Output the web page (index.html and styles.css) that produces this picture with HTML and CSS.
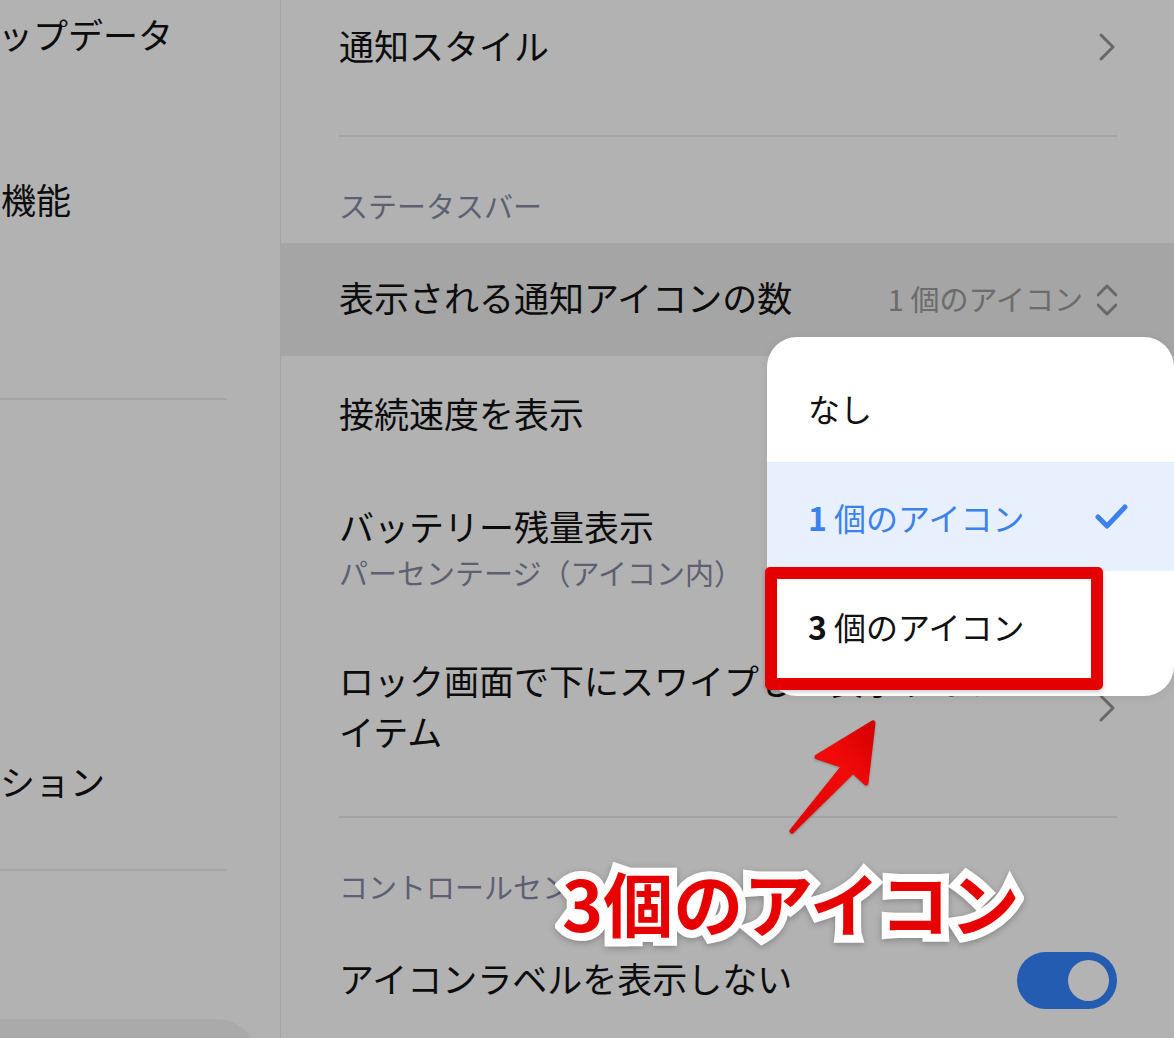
FILE: index.html
```html
<!DOCTYPE html>
<html lang="ja">
<head>
  <meta charset="UTF-8" />
  <title>通知とステータスバー</title>
  <link rel="stylesheet" href="styles.css">
</head>
<body>

  <div class="screen">
    <!-- 左側メニュー -->
    <aside class="side">
      <div class="side-item item-update"><span class="clip clip-update">アップデータ</span></div>
      <div class="side-item item-feature"><span class="clip clip-feature">便利機能</span></div>
      <div class="side-divider divider-one"></div>
      <div class="side-item item-option"><span class="clip clip-option">オプション</span></div>
      <div class="side-divider divider-two"></div>
      <div class="side-active"></div>
    </aside>

    <!-- 設定の一覧 -->
    <main class="panel">
      <div class="row row-first">
        <span class="title">通知スタイル</span>
        <svg class="chev" width="20" height="30" viewBox="0 0 20 30"><path d="M4 3 L16 15 L4 27" /></svg>
      </div>
      <div class="divider divider-first"></div>

      <div class="section-title">ステータスバー</div>

      <div class="row row-hl">
        <span class="title">表示される通知アイコンの数</span>
        <span class="value">
          <span class="value-text">1 個のアイコン</span>
          <svg class="updown" width="20" height="32" viewBox="0 0 20 32"><path d="M1 11 L10 2 L19 11" /><path d="M1 21 L10 30 L19 21" /></svg>
        </span>
      </div>

      <div class="row row-speed">
        <span class="title">接続速度を表示</span>
      </div>

      <div class="row row-battery">
        <div class="text">
          <div class="title">バッテリー残量表示</div>
          <div class="sub">パーセンテージ（アイコン内）</div>
        </div>
      </div>

      <div class="row row-lock">
        <div class="title lock-title">ロック画面で下にスワイプして表示するア<br>イテム</div>
        <svg class="chev" width="20" height="30" viewBox="0 0 20 30"><path d="M4 3 L16 15 L4 27" /></svg>
      </div>
      <div class="divider divider-lock"></div>

      <div class="section-title">コントロールセンター</div>

      <div class="row row-toggle">
        <span class="title">アイコンラベルを表示しない</span>
        <span class="toggle"><span class="knob"></span></span>
      </div>
    </main>
  </div>

  <!-- 選択メニュー -->
  <div class="popup">
    <div class="option">なし</div>
    <div class="option selected">
      <span><span class="num">1</span> 個のアイコン</span>
      <svg width="36" height="30" viewBox="0 0 36 30"><path d="M4 15 L13 24 L31 5" /></svg>
    </div>
    <div class="option"><span><span class="num">3</span> 個のアイコン</span></div>
  </div>

  <!-- 注釈 -->
  <div class="mark-box"></div>
  <svg class="arrow" width="110" height="130" viewBox="0 0 110 130">
    <defs>
      <linearGradient id="arrowFill" x1="0" y1="1" x2="1" y2="0">
        <stop offset="0" stop-color="#e00000" />
        <stop offset="0.6" stop-color="#f20a0a" />
        <stop offset="1" stop-color="#d40000" />
      </linearGradient>
    </defs>
    <path d="M12 121 L64 56 L37 47 L93 13 L86 73 L73 61 Z" fill="url(#arrowFill)" stroke="url(#arrowFill)" stroke-width="5" stroke-linejoin="round" />
  </svg>
  <div class="callout" data-text="3個のアイコン">3個のアイコン</div>

</body>
</html>
```

FILE: styles.css
```css
/* リセット */
* {
  margin: 0;
  padding: 0;
  box-sizing: border-box;
}
body {
  width: 1174px;
  height: 1038px;
  overflow: hidden;
  background: #b2b2b2;
  color: #0c0c0c;
  font-family: "Noto Sans CJK JP", "Noto Sans", sans-serif;
  position: relative;
}
.screen {
  display: flex;
  height: 100%;
}

/* 左側メニュー */
.side {
  width: 281px;
  flex-shrink: 0;
  border-right: 1px solid #a4a4a4;
  overflow: hidden;
}
.side-item {
  height: 70px;
  display: flex;
  align-items: center;
  font-size: 35px;
  white-space: nowrap;
}
.clip-update { margin-left: -37px; margin-top: -4px; }
.clip-feature { margin-left: -69px; margin-top: -4px; }
.clip-option { margin-left: -70px; margin-top: -4px; }
.item-feature { margin-top: 95px; }
.side-divider {
  width: 227px;
  height: 2px;
  background: #a5a5a5;
}
.divider-one { margin-top: 163px; }
.item-option { margin-top: 347px; }
.divider-two { margin-top: 52px; }
.side-active {
  margin-top: 148px;
  width: 257px;
  height: 80px;
  background: #aaaaaa;
  border-radius: 0 40px 40px 0;
}

/* 設定の一覧 */
.panel {
  flex: 1;
  display: flex;
  flex-direction: column;
}
.row {
  display: flex;
  align-items: center;
  justify-content: space-between;
  padding: 0 57px 0 58px;
}
.row > .title,
.row > .text {
  margin-top: -6px;
}
.title {
  font-size: 35px;
  line-height: 51px;
}
.sub {
  font-size: 29px;
  line-height: 42px;
  color: #5e6070;
}
.row-first {
  height: 94px;
  margin-bottom: 41px;
}
.row-hl {
  height: 113px;
  background: #a5a5a5;
}
.row-speed { height: 118px; }
.row-battery { height: 150px; }
.row-lock {
  height: 167px;
  margin-bottom: 25px;
}
.row-toggle { height: 113px; }

.divider {
  height: 2px;
  background: #a3a3a3;
  margin: 0 57px 0 58px;
}
.section-title {
  padding: 50px 58px 20px;
  font-size: 29px;
  line-height: 36px;
  color: #5d6072;
  white-space: nowrap;
}

.chev path,
.updown path {
  fill: none;
  stroke: #686868;
  stroke-width: 3;
  stroke-linecap: round;
  stroke-linejoin: round;
}
.value {
  display: flex;
  align-items: center;
  gap: 14px;
}
.value-text {
  font-size: 29px;
  color: #6c6c6c;
  margin-top: -4px;
}

/* スイッチ */
.toggle {
  width: 100px;
  height: 57px;
  border-radius: 29px;
  background: #245cb2;
  display: flex;
  align-items: center;
  justify-content: flex-end;
  padding-right: 8px;
}
.knob {
  width: 41px;
  height: 41px;
  border-radius: 50%;
  background: #b3b3b3;
}

/* 選択メニュー */
.popup {
  position: absolute;
  left: 767px;
  top: 337px;
  width: 407px;
  padding: 16px 0;
  background: #fff;
  border-radius: 30px;
  box-shadow: 0 2px 10px rgba(0, 0, 0, 0.08);
}
.option {
  height: 109px;
  display: flex;
  align-items: center;
  justify-content: space-between;
  padding: 0 44px 0 41px;
  font-size: 32px;
  color: #111;
}
.option .num {
  font-weight: 700;
}
.selected {
  background: #e8f0fd;
  color: #3b82ee;
}
.selected path {
  fill: none;
  stroke: #3b82ee;
  stroke-width: 5;
  stroke-linecap: round;
  stroke-linejoin: round;
}

/* 注釈 */
.mark-box {
  position: absolute;
  left: 765px;
  top: 567px;
  width: 338px;
  height: 123px;
  border: 12px solid #e50000;
  border-radius: 5px;
  box-shadow: 0 2px 4px rgba(0, 0, 0, 0.2);
}
.arrow {
  position: absolute;
  left: 780px;
  top: 710px;
  filter: drop-shadow(0 1px 1px rgba(0, 0, 0, 0.25));
}
.callout {
  position: absolute;
  left: 562px;
  top: 866px;
  z-index: 5;
  font-size: 70px;
  line-height: 72px;
  font-weight: 700;
  color: #e60000;
  white-space: nowrap;
  filter: drop-shadow(0 2px 3px rgba(0, 0, 0, 0.25));
}
.callout::before {
  content: attr(data-text);
  position: absolute;
  left: 0;
  top: 0;
  z-index: -1;
  color: #fff;
  -webkit-text-stroke: 16px #fff;
}
```
